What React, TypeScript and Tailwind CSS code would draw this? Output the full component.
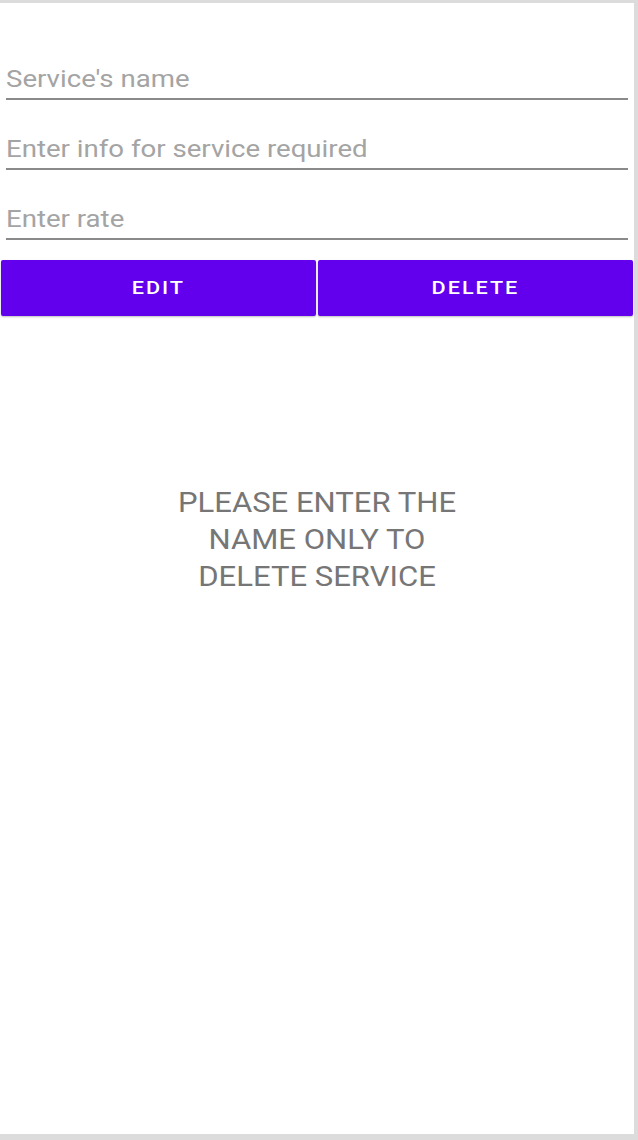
import React from "react";

export default function App() {
  const font = { fontFamily: "Roboto, 'Noto Sans', sans-serif" };
  return (
    <div className="w-[638px] h-[1140px] bg-[#dcdcdc] pt-[3px] pr-[4px] pb-[6px]" style={font}>
      <div className="w-full h-full bg-white flex flex-col">
        <div className="px-[6px] pr-[6px] pt-[27px] flex flex-col">
          {["Service's name", "Enter info for service required", "Enter rate"].map((t) => (
            <div key={t} className="h-[70px] flex items-end pb-[7px] border-b-2 border-[#8a8a8a]">
              <span className="inline-block origin-left scale-x-[1.15] text-[24px] leading-[24px] text-[#a4a4a4]">{t}</span>
            </div>
          ))}
        </div>
        <div className="flex gap-[2px] px-[1px] mt-[20px]">
          <button className="flex-1 h-[56px] bg-[#6200ee] rounded-[2px] shadow-[0_1px_2px_rgba(0,0,0,0.25)] text-white text-[19px] font-medium tracking-[0.09em]">
            <span className="inline-block scale-x-[1.14]">EDIT</span>
          </button>
          <button className="flex-1 h-[56px] bg-[#6200ee] rounded-[2px] shadow-[0_1px_2px_rgba(0,0,0,0.25)] text-white text-[19px] font-medium tracking-[0.09em]">
            <span className="inline-block scale-x-[1.14]">DELETE</span>
          </button>
        </div>
        <div className="mt-[169px] flex justify-center">
          <p className="text-center text-[27px] leading-[37px] text-[#767676] w-[300px] scale-x-[1.15]">
            PLEASE ENTER THE
            <br />
            NAME ONLY TO
            <br />
            DELETE SERVICE
          </p>
        </div>
      </div>
    </div>
  );
}
